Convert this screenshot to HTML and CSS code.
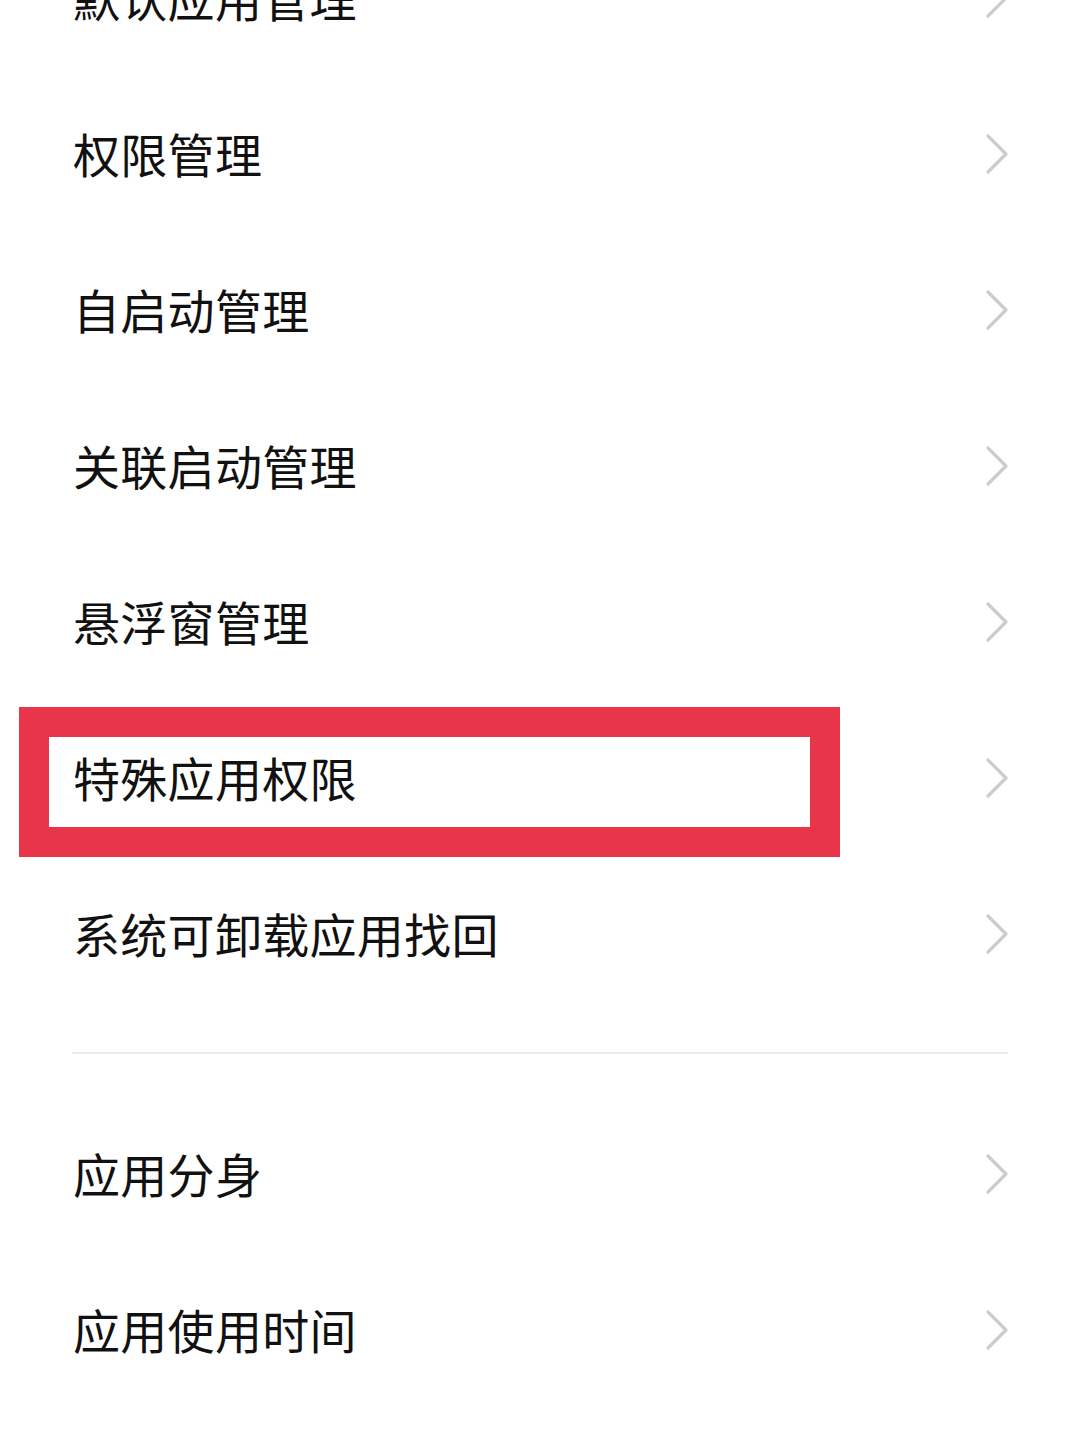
FILE: index.html
```html
<!DOCTYPE html>
<html lang="zh-CN">

<head>
    <meta charset="UTF-8">
    <meta name="viewport" content="width=device-width, initial-scale=1.0">
    <title>应用管理</title>
    <link rel="stylesheet" href="styles.css">
</head>

<body>
    <div class="page">
        <ul class="group first">
            <li class="item"><span class="label">默认应用管理</span><svg class="arrow" viewBox="0 0 24 42"><polyline points="3,3 21,21 3,39"/></svg></li>
            <li class="item"><span class="label">权限管理</span><svg class="arrow" viewBox="0 0 24 42"><polyline points="3,3 21,21 3,39"/></svg></li>
            <li class="item"><span class="label">自启动管理</span><svg class="arrow" viewBox="0 0 24 42"><polyline points="3,3 21,21 3,39"/></svg></li>
            <li class="item"><span class="label">关联启动管理</span><svg class="arrow" viewBox="0 0 24 42"><polyline points="3,3 21,21 3,39"/></svg></li>
            <li class="item"><span class="label">悬浮窗管理</span><svg class="arrow" viewBox="0 0 24 42"><polyline points="3,3 21,21 3,39"/></svg></li>
            <li class="item marked">
                <span class="label">特殊应用权限</span><svg class="arrow" viewBox="0 0 24 42"><polyline points="3,3 21,21 3,39"/></svg>
                <div class="mark"></div>
            </li>
            <li class="item"><span class="label">系统可卸载应用找回</span><svg class="arrow" viewBox="0 0 24 42"><polyline points="3,3 21,21 3,39"/></svg></li>
        </ul>
        <div class="divider"></div>
        <ul class="group">
            <li class="item"><span class="label">应用分身</span><svg class="arrow" viewBox="0 0 24 42"><polyline points="3,3 21,21 3,39"/></svg></li>
            <li class="item"><span class="label">应用使用时间</span><svg class="arrow" viewBox="0 0 24 42"><polyline points="3,3 21,21 3,39"/></svg></li>
        </ul>
    </div>
</body>

</html>
```

FILE: styles.css
```css
* {
    margin: 0;
    padding: 0;
    box-sizing: border-box;
}

body {
    background: #ffffff;
    font-family: "Noto Sans CJK SC", "Noto Sans", sans-serif;
    color: #111111;
    overflow: hidden;
}

.page {
    width: 1080px;
    height: 1440px;
    overflow: hidden;
}

.group {
    list-style: none;
}

.group.first {
    margin-top: -79px;
}

.item {
    height: 156px;
    padding: 0 71px 0 73px;
    display: flex;
    align-items: center;
    justify-content: space-between;
    position: relative;
}

.label {
    font-size: 47px;
    line-height: 1;
    letter-spacing: 0.3px;
    margin-bottom: 6px;
    position: relative;
    z-index: 2;
}

.arrow {
    width: 24px;
    height: 42px;
    fill: none;
    stroke: #cccccc;
    stroke-width: 3.2;
    stroke-linecap: round;
    stroke-linejoin: round;
    margin-bottom: 2px;
}

.mark {
    position: absolute;
    left: 19px;
    top: 6px;
    width: 821px;
    height: 150px;
    border: 30px solid #e8354a;
    z-index: 1;
}

.divider {
    height: 2px;
    background: #ebebeb;
    margin: 39px 72px 43px 72px;
}
```
